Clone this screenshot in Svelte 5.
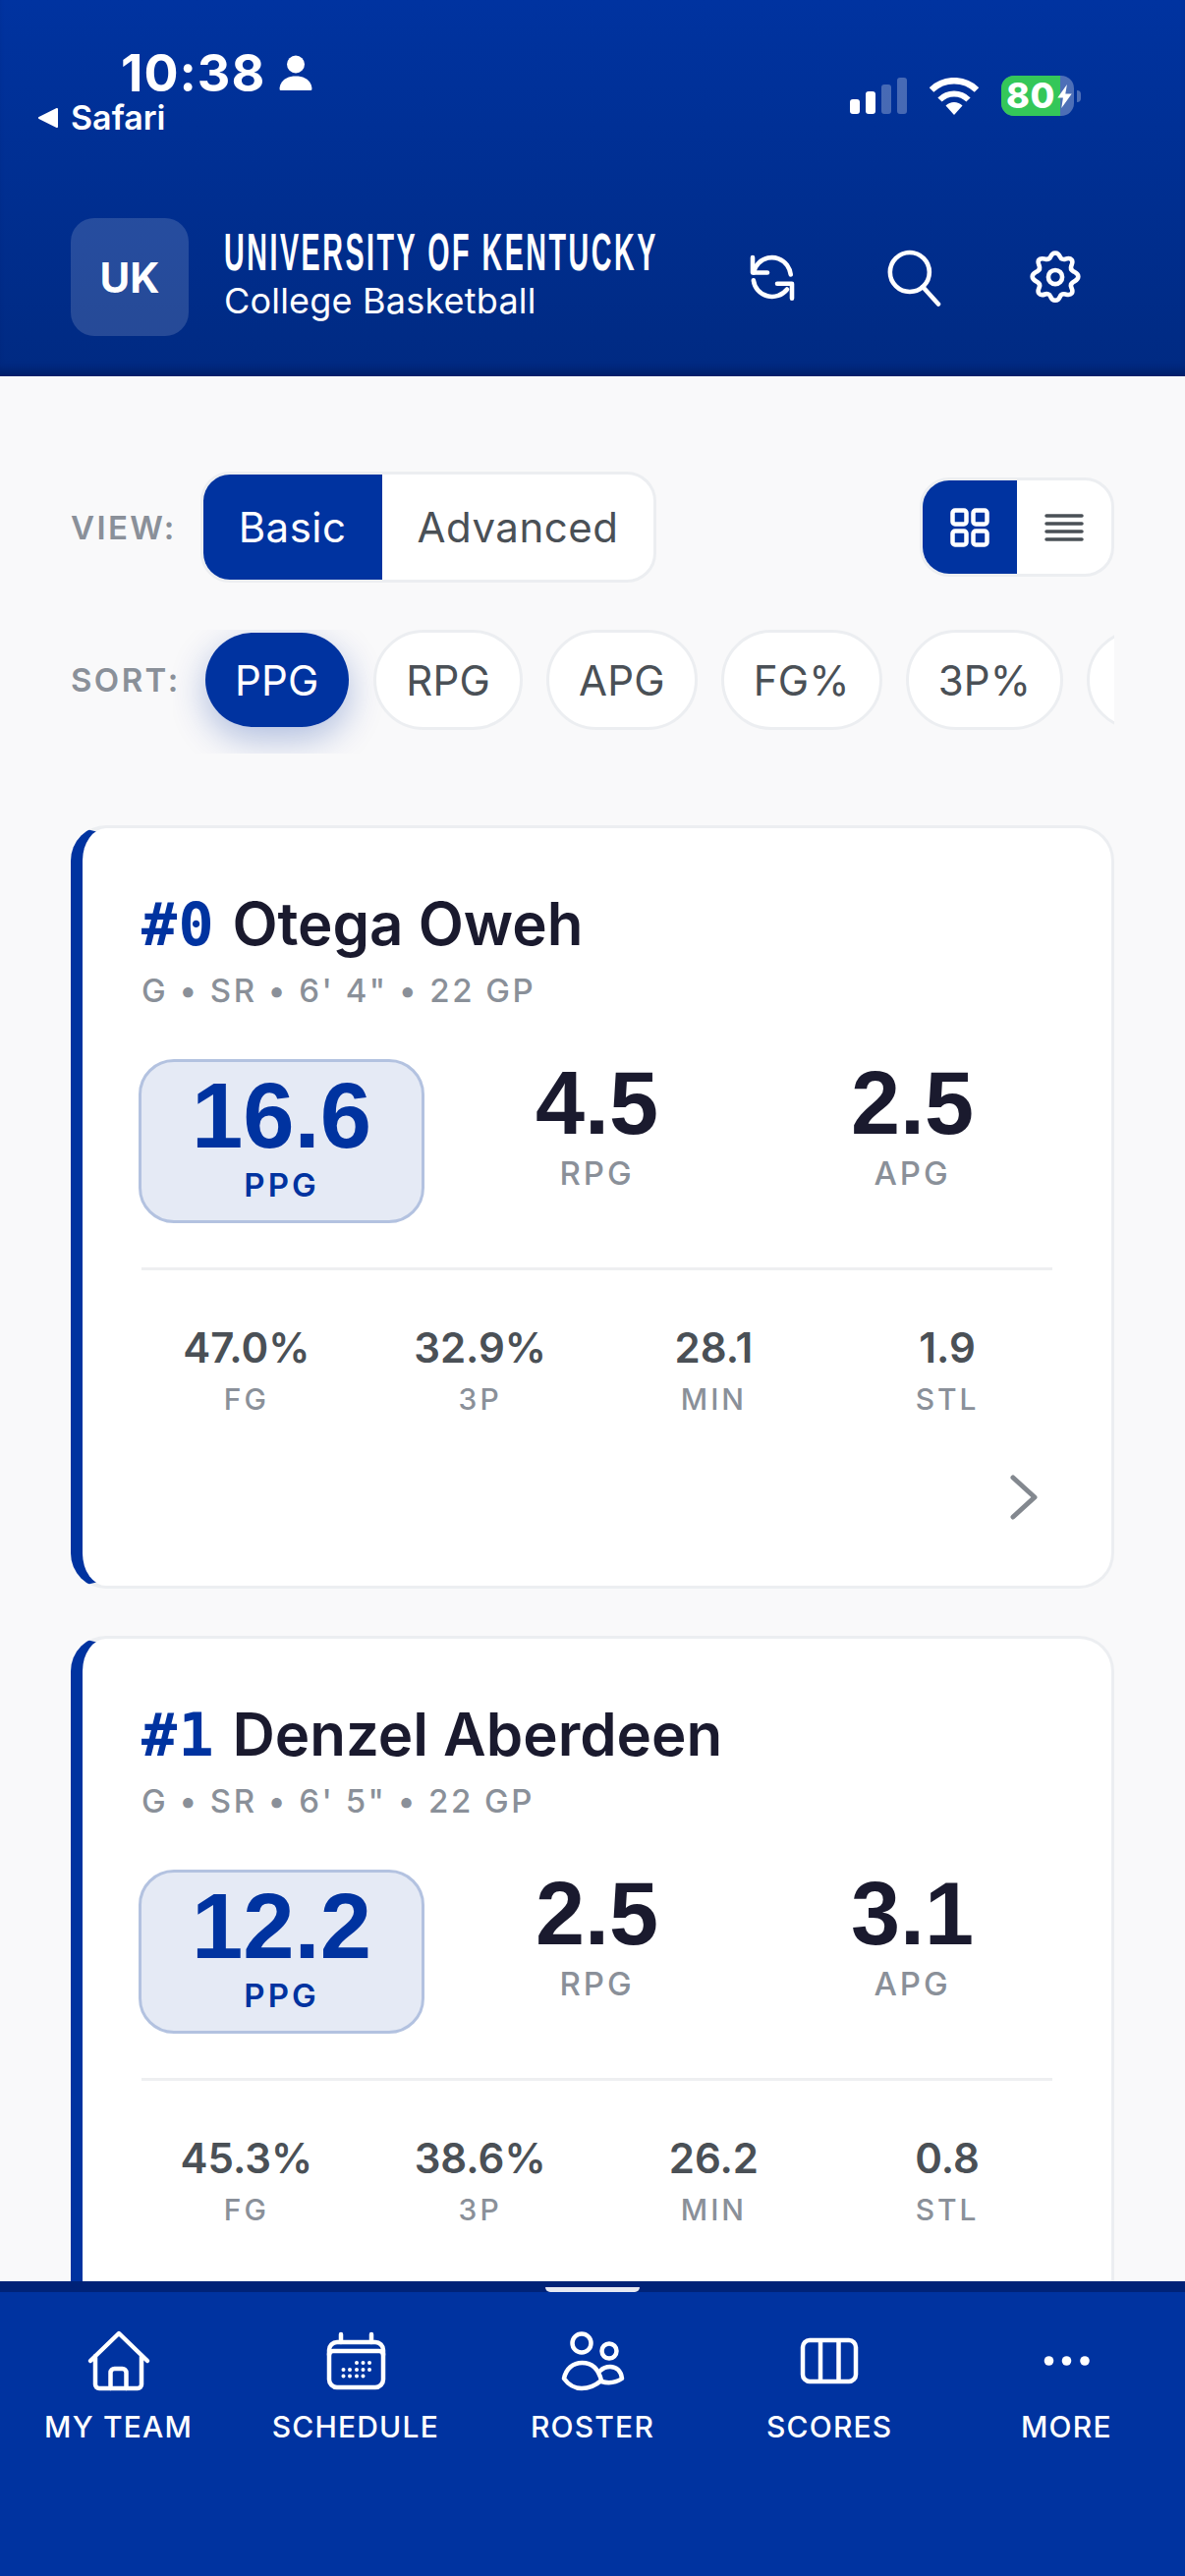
<script>
  const sorts = ['PPG', 'RPG', 'APG', 'FG%', '3P%', ''];
  const players = [
    { num: '0', name: 'Otega Oweh', meta: `G • SR • 6' 4" • 22 GP`, ppg: '16.6', rpg: '4.5', apg: '2.5', fg: '47.0%', tp: '32.9%', min: '28.1', stl: '1.9' },
    { num: '1', name: 'Denzel Aberdeen', meta: `G • SR • 6' 5" • 22 GP`, ppg: '12.2', rpg: '2.5', apg: '3.1', fg: '45.3%', tp: '38.6%', min: '26.2', stl: '0.8' }
  ];
</script>

<div class="page">
  <header class="top">
    <div class="status">
      <div class="status-left">
        <div class="clock">
          <span class="time">10:38</span>
          <svg class="person" viewBox="0 0 33 36" aria-hidden="true"><circle cx="16.5" cy="9.5" r="9" fill="#fff"/><path d="M1 36c-1.6 0-1-4 .5-7 2.5-5 8-7.5 15-7.5s12.500 2.500 15 7.500c1.500 3 2.100 7 .5 7z" fill="#fff"/></svg>
        </div>
        <div class="back"><svg class="back-tri" viewBox="0 0 22 20" aria-hidden="true"><path d="M20 1 2 10l18 9z" fill="#fff" stroke="#fff" stroke-width="2" stroke-linejoin="round"/></svg><span>Safari</span></div>
      </div>
      <div class="status-right">
        <div class="signal">
          <i class="bar b1"></i><i class="bar b2"></i><i class="bar b3"></i><i class="bar b4"></i>
        </div>
        <svg class="wifi" viewBox="0 0 50 38" aria-hidden="true">
          <path d="M25 38 16.500 28.500a12 12 0 0 1 17 0z" fill="#fff"/>
          <path d="M10.500 22.500a20.500 20.500 0 0 1 29 0" fill="none" stroke="#fff" stroke-width="6"/>
          <path d="M2 12.500a33 33 0 0 1 46 0" fill="none" stroke="#fff" stroke-width="6.500"/>
        </svg>
        <div class="battery">
          <div class="batt-body"><div class="batt-fill"></div><span class="batt-text">80</span>
            <svg class="bolt" viewBox="0 0 18 30" aria-hidden="true"><path d="M12 0 0 17h7l-2 13L18 12h-8z" fill="#fff"/></svg>
          </div>
          <i class="nub"></i>
        </div>
      </div>
    </div>
    <div class="brand">
      <div class="logo">UK</div>
      <div class="brand-text">
        <div class="title"><span>UNIVERSITY OF KENTUCKY</span></div>
        <div class="sub">College Basketball</div>
      </div>
      <div class="actions">
        <svg class="act" viewBox="0 0 72 72" aria-hidden="true" fill="none" stroke="#fff" stroke-width="5.500" stroke-linecap="round" stroke-linejoin="round">
          <path d="M13 30.500a23 23 0 0 1 41-9c2.500 3.500 4 7.500 4.500 11.500"/><path d="M12 12v18.500h18"/>
          <path d="M13 40a23 23 0 0 0 41 11"/><path d="M60 62V44H42"/>
        </svg>
        <svg class="act" viewBox="0 0 72 72" aria-hidden="true" fill="none" stroke="#fff" stroke-width="5.500" stroke-linecap="round" stroke-linejoin="round">
          <circle cx="31" cy="30" r="24"/><path d="M47 48l19 21"/>
        </svg>
        <svg class="act" viewBox="0 0 72 72" aria-hidden="true" fill="none" stroke="#fff" stroke-width="5.500" stroke-linecap="round" stroke-linejoin="round">
          <circle cx="36" cy="36" r="8.500"/>
          <path d="M36 6.500c3.500 0 5 2.500 6 5s4 3.500 6.500 2.500 5.500-1.500 7.500 1 .5 5-.5 7.500 0 5 2.500 6.500 6 2.500 6 6.500-3.500 5-6 6.500-3.500 4-2.500 6.500 2.500 5 .5 7.500-5 1.500-7.500 1-5.500 0-6.500 2.500-2.500 5-6 5-5-2.500-6-5-4-3.500-6.500-2.500-5.500 1.500-7.500-1-.5-5 .5-7.500 0-5-2.500-6.500-6-2.500-6-6.500 3.500-5 6-6.500 3.500-4 2.500-6.500-2.500-5-.5-7.500 5-1.500 7.500-1 5.500 0 6.500-2.500 2.500-5 6-5z"/>
        </svg>
      </div>
    </div>
  </header>

  <main class="content">
    <div class="row view-row">
      <span class="ctl-label">VIEW:</span>
      <div class="seg">
        <button class="seg-btn on">Basic</button>
        <button class="seg-btn">Advanced</button>
      </div>
      <div class="layout-toggle">
        <button class="lt on" aria-label="Grid view">
          <svg viewBox="0 0 40 40" width="40" height="40" fill="none" stroke="#fff" stroke-width="4.500"><rect x="2.500" y="2.500" width="14" height="14" rx="2.500"/><rect x="23.500" y="2.500" width="14" height="14" rx="2.500"/><rect x="2.500" y="23.500" width="14" height="14" rx="2.500"/><rect x="23.500" y="23.500" width="14" height="14" rx="2.500"/></svg>
        </button>
        <button class="lt" aria-label="List view">
          <svg viewBox="0 0 40 28" width="40" height="28" fill="none" stroke="#4a5056" stroke-width="3.500" stroke-linecap="round"><path d="M2 2h36M2 10h36M2 18h36M2 26h36"/></svg>
        </button>
      </div>
    </div>

    <div class="sort-row">
      <span class="ctl-label">SORT:</span>
      <div class="sort-scroll">
        {#each sorts as s, i}
          <button class="pill" class:on={i === 0} class:blank={s === ''}>{s}</button>
        {/each}
      </div>
    </div>

    <div class="cards">
      {#each players as p}
        <article class="card">
          <div class="name-line"><span class="num">#{p.num}</span> <span class="name">{p.name}</span></div>
          <div class="meta">{p.meta}</div>
          <div class="primary">
            <div class="stat hi"><div class="big">{p.ppg}</div><div class="lab">PPG</div></div>
            <div class="stat"><div class="big">{p.rpg}</div><div class="lab">RPG</div></div>
            <div class="stat"><div class="big">{p.apg}</div><div class="lab">APG</div></div>
          </div>
          <div class="secondary">
            <div class="s2"><div class="val">{p.fg}</div><div class="lab2">FG</div></div>
            <div class="s2"><div class="val">{p.tp}</div><div class="lab2">3P</div></div>
            <div class="s2"><div class="val">{p.min}</div><div class="lab2">MIN</div></div>
            <div class="s2"><div class="val">{p.stl}</div><div class="lab2">STL</div></div>
          </div>
          <div class="more">
            <svg viewBox="0 0 30 46" width="30" height="46" fill="none" stroke="#83888f" stroke-width="5" stroke-linecap="round" stroke-linejoin="round"><path d="M4 3l22 20L4 43"/></svg>
          </div>
        </article>
      {/each}
    </div>
  </main>

  <nav class="tabs">
    <div class="tab">
      <svg viewBox="0 0 72 72" class="ti"><path d="M7 34 36 6l29 28M12 29v29a4 4 0 0 0 4 4h39a4 4 0 0 0 4-4V29"/><path d="M27.500 62V46a4 4 0 0 1 4-4h8a4 4 0 0 1 4 4v16"/></svg>
      <span>MY TEAM</span>
    </div>
    <div class="tab">
      <svg viewBox="0 0 72 72" class="ti"><rect x="9" y="15" width="55" height="46" rx="8"/><path d="M9 28a4 4 0 0 1 4-4h47a4 4 0 0 1 4 4M21 7v8M52 7v8"/>
        <g class="dots"><circle cx="37" cy="36" r="2"/><circle cx="43.500" cy="36" r="2"/><circle cx="50" cy="36" r="2"/><circle cx="23.500" cy="43" r="2"/><circle cx="30" cy="43" r="2"/><circle cx="37" cy="43" r="2"/><circle cx="43.500" cy="43" r="2"/><circle cx="50" cy="43" r="2"/><circle cx="23.500" cy="49.500" r="2"/><circle cx="30" cy="49.500" r="2"/><circle cx="37" cy="49.500" r="2"/><circle cx="43.500" cy="49.500" r="2"/></g>
      </svg>
      <span>SCHEDULE</span>
    </div>
    <div class="tab active">
      <i class="indicator"></i>
      <svg viewBox="0 0 72 72" class="ti"><circle cx="25" cy="16" r="9.500"/><circle cx="53" cy="24" r="7.500"/><path d="M7 52C9 42 16 36 25.500 36 35 36 42 42 45 54 38 60 32 62 25 62 18 62 12 59 7 52z"/><path d="M44 44c3-3 6-4 10-4 6 0 11 4 12 12-6 4-14 5-21 3"/></svg>
      <span>ROSTER</span>
    </div>
    <div class="tab">
      <svg viewBox="0 0 72 72" class="ti"><rect x="9" y="13" width="54" height="42" rx="7"/><path d="M27 14.500v39M45.500 14.500v39"/></svg>
      <span>SCORES</span>
    </div>
    <div class="tab">
      <svg viewBox="0 0 72 72" class="ti"><circle cx="18.500" cy="34" r="4.800" class="solid"/><circle cx="36.500" cy="34" r="4.800" class="solid"/><circle cx="55" cy="34" r="4.800" class="solid"/></svg>
      <span>MORE</span>
    </div>
  </nav>
</div>

<style>
  :global(body) { margin: 0; background: #f9f9f9; }
  .page {
    width: 1206px; height: 2622px; display: flex; flex-direction: column; overflow: hidden;
    font-family: Inter, "Liberation Sans", sans-serif; background: #f9f9fa; color: #1a1a2e;
  }
  button { font-family: inherit; margin: 0; padding: 0; border: 0; background: none; }

  .top {
    height: 383px; box-sizing: border-box; flex: none; position: relative; color: #fff;
    background: linear-gradient(180deg, #0033a0 0%, #002a82 100%);
    box-shadow: inset 0 -12px 10px -6px rgba(0, 15, 70, .45);
    padding: 48px 72px 0 38px;
  }
  .status { display: flex; justify-content: space-between; height: 92px; }
  .status-left { display: flex; flex-direction: column; }
  .clock { display: flex; align-items: center; gap: 14px; margin-left: 85px; height: 54px; }
  .time { font-size: 52px; font-weight: 700; line-height: 54px; letter-spacing: 1px; }
  .person { width: 34px; height: 36px; margin-top: -3px; }
  .back { display: flex; align-items: center; gap: 12px; font-size: 34px; font-weight: 600; line-height: 36px; }
  .back-tri { width: 22px; height: 20px; }
  .status-right { display: flex; align-items: center; gap: 23px; position: absolute; right: 106px; top: 77px; height: 41px; }
  .signal { display: flex; align-items: flex-end; gap: 6px; height: 37px; }
  .bar { width: 10px; border-radius: 3px; background: #fff; display: block; }
  .b1 { height: 15px; } .b2 { height: 23px; }
  .b3 { height: 30px; background: rgba(255,255,255,.28); }
  .b4 { height: 37px; background: rgba(255,255,255,.28); }
  .wifi { width: 50px; height: 38px; }
  .battery { display: flex; align-items: center; gap: 3px; }
  .batt-body { width: 74px; height: 41px; border-radius: 13px; background: rgba(255,255,255,.3); position: relative; }
  .batt-fill { position: absolute; left: 0; top: 0; bottom: 0; width: 60px; background: #34c759; border-radius: 13px 0 0 13px; }
  .batt-text { position: absolute; left: 5px; top: 0; line-height: 41px; font-size: 36px; font-weight: 800; color: #fff; letter-spacing: .5px; }
  .bolt { position: absolute; left: 56px; top: 9px; width: 17px; height: 24px; }
  .nub { display: block; width: 4px; height: 12px; background: rgba(255,255,255,.3); border-radius: 0 4px 4px 0; }

  .brand { display: flex; align-items: center; margin: 82px 0 0 34px; height: 120px; }
  .logo {
    width: 120px; height: 120px; flex: none; display: flex; align-items: center; justify-content: center;
    background: rgba(255,255,255,.15); border-radius: 24px; font-size: 42px; font-weight: 700;
  }
  .brand-text { margin-left: 36px; width: 500px; }
  .title { height: 44px; line-height: 44px; margin-top: -3px; white-space: nowrap; overflow: visible; }
  .title span {
    display: inline-block; transform-origin: 0 50%; transform: scaleX(.53);
    font-family: "Liberation Sans", sans-serif; font-weight: 700; font-size: 54px; letter-spacing: 4.800px;
  }
  .sub { font-size: 36px; line-height: 42px; margin-top: 7px; letter-spacing: .2px; }
  .actions { display: flex; gap: 84px; margin-left: auto; margin-right: 30px; }
  .act { width: 60px; height: 60px; display: block; }

  .content { flex: 1; min-height: 0; overflow: hidden; padding: 0 72px; box-sizing: border-box; }
  .row { display: flex; align-items: center; }
  .view-row { margin-top: 97px; height: 113px; }
  .ctl-label { font-size: 33px; font-weight: 600; letter-spacing: 2.400px; color: #8a9099; flex: none; }
  .seg {
    display: flex; margin-left: 24px; height: 113px; box-sizing: border-box; border: 3px solid #eceef1; border-radius: 30px;
    background: #fff; overflow: hidden;
  }
  .seg-btn { padding: 0 36px; font-size: 42px; color: #4a5056; height: 100%; letter-spacing: .5px; }
  .seg-btn.on { background: #0033a0; color: #fff; }
  .layout-toggle {
    display: flex; margin-left: auto; height: 101px; box-sizing: border-box; border: 3px solid #eceef1; border-radius: 30px; background: #fff; overflow: hidden;
  }
  .lt { width: 96px; height: 100%; display: flex; align-items: center; justify-content: center; }
  .lt.on { background: #0033a0; }

  .sort-row { display: flex; align-items: flex-start; margin-top: 48px; position: relative; }
  .sort-row .ctl-label { line-height: 102px; position: relative; z-index: 1; }
  .sort-scroll {
    display: flex; gap: 24px; overflow: hidden; flex: 1; min-width: 0;
    margin-left: -8px; padding: 0 0 24px 30px;
  }
  .pill {
    flex: none; height: 102px; padding: 0 30px; border: 3px solid #eceef1; background: #fff; border-radius: 60px;
    font-size: 42px; color: #4a5056; box-sizing: border-box; letter-spacing: .2px;
  }
  .pill.blank { width: 150px; }
  .pill.on {
    background: #0033a0; border: 0; height: 96px; margin: 3px 1px 3px 3px; padding: 0 30.500px; color: #fff;
    box-shadow: 0 12px 36px rgba(0, 51, 160, .3);
  }

  .cards { display: flex; flex-direction: column; gap: 48px; margin-top: 73px; }
  .card {
    background: #fff; border: 3px solid #eceef1; border-left: 12px solid #0033a0; border-radius: 36px;
    padding: 61px 60px 30px 60px; flex: none; height: 777px; box-sizing: border-box;
  }
  .name-line { font-size: 60px; font-weight: 600; line-height: 72px; white-space: nowrap; }
  .num { color: #0033a0; font-family: "DejaVu Sans Mono", monospace; font-weight: 700; font-size: 60px; letter-spacing: 1.500px; margin-right: 2px; }
  .meta { font-size: 33px; font-weight: 500; letter-spacing: 2.500px; color: #8a9099; margin-top: 11px; line-height: 40px; }
  .primary { display: grid; grid-template-columns: repeat(3, 1fr); gap: 36px; margin-top: 50px; padding-bottom: 45px; border-bottom: 3px solid #eeeff1; }
  .stat { text-align: center; padding: 0; height: 167px; box-sizing: border-box; }
  .big { font-family: "Liberation Sans", sans-serif; font-weight: 700; font-size: 90px; line-height: 90px; }
  .lab { font-size: 33px; font-weight: 500; letter-spacing: 3px; color: #8a9099; line-height: 40px; margin-top: 6px; }
  .hi { margin: 0 -3px; background: #e5eaf5; border: 3px solid #b3c2e0; border-radius: 36px; padding-top: 10px; }
  .hi .big, .hi .lab { color: #0033a0; }
  .hi .big { font-size: 94px; }
  .hi .lab { font-weight: 600; margin-top: 5px; }
  .secondary { display: grid; grid-template-columns: repeat(4, 1fr); gap: 24px; margin-top: 52px; }
  .s2 { text-align: center; }
  .val { font-size: 42px; font-weight: 600; color: #4a5056; line-height: 54px; }
  .lab2 { font-size: 30px; font-weight: 500; letter-spacing: 3px; color: #8a9099; line-height: 40px; margin-top: 5px; }
  .more { display: flex; justify-content: flex-end; margin-top: 57px; padding-right: 14px; }

  .tabs {
    flex: none; height: 300px; box-sizing: border-box; background: #0033a0; display: grid; grid-template-columns: repeat(5, 1fr);
    border-top: 11px solid #002277; position: relative; z-index: 2;
  }
  .tab { display: flex; flex-direction: column; align-items: center; color: #fff; font-size: 30px; font-weight: 500; letter-spacing: 1.200px; position: relative; padding-top: 36px; line-height: 36px; }
  .ti { width: 72px; height: 72px; fill: none; stroke: #fff; stroke-width: 4.500; stroke-linecap: round; stroke-linejoin: round; margin-bottom: 11px; }
  .ti .dots, .ti .solid { fill: #fff; stroke: none; }
  .indicator { position: absolute; top: -5px; left: 50%; margin-left: -48px; width: 96px; height: 5px; background: #e6e9f2; border-radius: 0 0 6px 6px; display: block; }
</style>
